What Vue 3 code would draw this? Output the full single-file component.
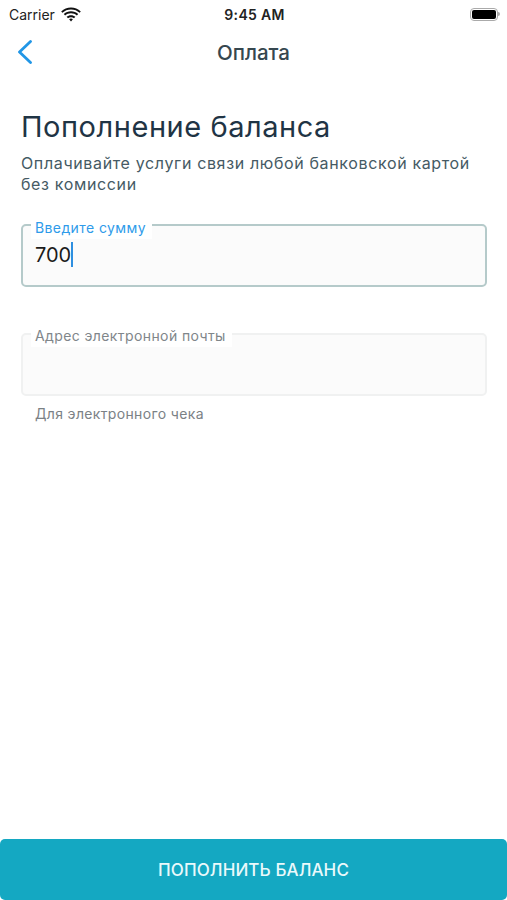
<template>
  <div class="screen">
    <div class="status-bar">
      <div class="status-left">
        <span>Carrier</span>
        <svg width="20" height="15" viewBox="0 0 20 15" fill="#111">
          <path d="M10 2.500c3.300 0 6.300 1.200 8.600 3.300l1.200-1.400C17.100 2 13.700.5 10 .5S2.900 2 .2 4.400l1.200 1.400C3.700 3.700 6.700 2.500 10 2.500z" />
          <path d="M10 6.300c2.200 0 4.300.8 5.900 2.200l1.300-1.500C15.200 5.300 12.700 4.300 10 4.300S4.800 5.300 2.800 7l1.300 1.500C5.700 7.100 7.800 6.300 10 6.300z" />
          <path d="M10 8.200c-1.700 0-3.200.6-4.400 1.600l1.400 1.500c.8-.7 1.900-1.100 3-1.100s2.200.4 3 1.100l1.400-1.500C13.200 8.800 11.700 8.200 10 8.200z" />
          <path d="M10 11.500c-.7 0-1.400.3-1.900.7L10 14.400l1.900-2.200c-.5-.4-1.200-.7-1.900-.7z" />
        </svg>
      </div>
      <div class="status-time">9:45 AM</div>
      <div class="battery">
        <div class="battery-body"><div class="battery-fill"></div></div>
        <div class="battery-cap"></div>
      </div>
    </div>

    <div class="nav-bar">
      <svg class="back" width="16" height="24" viewBox="0 0 16 24" fill="none" stroke="#2196e6" stroke-width="2.800" stroke-linecap="round" stroke-linejoin="round">
        <path d="M13.500 1.500 2.500 12l11 10.500" />
      </svg>
      <div class="nav-title">Оплата</div>
    </div>

    <div class="content">
      <h1 class="title">Пополнение баланса</h1>
      <p class="subtitle">Оплачивайте услуги связи любой банковской картой без комиссии</p>

      <div class="field active">
        <span class="field-label">Введите сумму</span>
        <div class="field-value">700<span class="caret"></span></div>
      </div>

      <div class="field disabled">
        <span class="field-label">Адрес электронной почты</span>
      </div>
      <div class="hint">Для электронного чека</div>
    </div>

    <button class="submit">ПОПОЛНИТЬ БАЛАНС</button>
  </div>
</template>

<script setup>
</script>

<style>
html, body {
  margin: 0;
  background: #fff;
}
</style>

<style scoped>
.screen {
  width: 507px;
  height: 900px;
  display: flex;
  flex-direction: column;
  background: #fff;
  font-family: Inter, "Noto Sans", sans-serif;
  overflow: hidden;
}

.status-bar {
  height: 28px;
  display: grid;
  grid-template-columns: 1fr auto 1fr;
  align-items: center;
  padding: 0 4px 0 9px;
  color: #222;
  font-size: 14px;
}

.status-left {
  display: flex;
  align-items: center;
  gap: 6px;
}

.status-time {
  font-weight: 600;
  font-size: 14px;
  letter-spacing: 0.300px;
  margin-left: -3px;
}

.battery {
  display: flex;
  align-items: center;
  justify-self: end;
  padding-right: 3px;
}

.battery-body {
  width: 28px;
  height: 13px;
  box-sizing: border-box;
  border: 1.500px solid #aaa;
  border-radius: 4px;
  padding: 1px;
}

.battery-fill {
  height: 100%;
  background: #000;
  border-radius: 2px;
}

.battery-cap {
  width: 2px;
  height: 4px;
  background: #aaa;
  border-radius: 0 2px 2px 0;
}

.nav-bar {
  height: 48px;
  display: flex;
  align-items: center;
  justify-content: center;
  position: relative;
}

.back {
  position: absolute;
  left: 17px;
  top: 12px;
}

.nav-title {
  font-size: 20.500px;
  font-weight: 500;
  color: #36474f;
}

.content {
  flex: 1;
  padding: 32px 20px 0 21px;
}

.title {
  margin: 0;
  font-size: 29px;
  line-height: 38px;
  font-weight: 400;
  letter-spacing: 0.540px;
  color: #1f3445;
}

.subtitle {
  margin: 7px 0 0;
  width: 455px;
  font-size: 16px;
  line-height: 21px;
  letter-spacing: 0.640px;
  color: #455a64;
}

.field {
  position: relative;
  height: 63px;
  box-sizing: border-box;
  border-radius: 5px;
  background: #fbfbfb;
}

.field.active {
  margin-top: 29px;
  border: 2px solid #b5caca;
}

.field.disabled {
  margin-top: 46px;
  border: 2px solid #f0f1f1;
}

.field-label {
  position: absolute;
  left: 8px;
  top: -7px;
  padding: 0 6px 3px 4px;
  background: #fff;
  font-size: 14px;
  line-height: 16px;
  letter-spacing: 0.400px;
}

.active .field-label {
  top: -6px;
  color: #2e9bea;
}

.disabled .field-label {
  color: #80868a;
}

.field-value {
  display: flex;
  align-items: center;
  height: 100%;
  padding: 0 0 2px 12px;
  box-sizing: border-box;
  font-size: 20px;
  color: #1b1b1b;
}

.caret {
  width: 2px;
  height: 25px;
  background: #2e8fe0;
}

.hint {
  margin: 9px 0 0 14px;
  font-size: 14px;
  line-height: 18px;
  letter-spacing: 0.350px;
  color: #7b8185;
}

.submit {
  height: 61px;
  width: 100%;
  border: none;
  border-radius: 5px;
  background: #14a8c2;
  color: #eaf9fb;
  font-family: inherit;
  font-size: 17px;
  font-weight: 500;
  letter-spacing: 0.100px;
}
</style>
